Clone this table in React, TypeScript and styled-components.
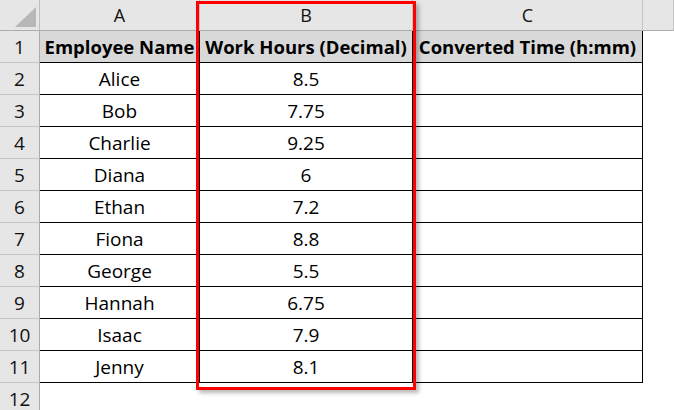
import React from "react";
import styled, { createGlobalStyle } from "styled-components";

const Global = createGlobalStyle`
  html, body { margin: 0; padding: 0; background: #ffffff; }
  body { width: 674px; height: 410px; overflow: hidden; }
`;

const Sheet = styled.div`
  position: relative;
  width: 674px;
  height: 410px;
  overflow: hidden;
  font-family: "Open Sans", "Noto Sans", sans-serif;
  color: #000;
`;

const Grid = styled.div`
  display: grid;
  grid-template-columns: 40px 160px 213px 230px 1fr;
  grid-template-rows: 31px repeat(12, 32px);
`;

const Corner = styled.div`
  position: relative;
  box-sizing: border-box;
  background: #e6e6e6;
  border-right: 1px solid #bfbfbf;
  border-bottom: 1px solid #ababab;
`;

const CornerTriangle = styled.svg`
  position: absolute;
  left: 15px;
  top: 7px;
`;

const ColHead = styled.div`
  box-sizing: border-box;
  background: #e6e6e6;
  border-right: 1px solid #c4c4c4;
  border-bottom: 1px solid #ababab;
  display: flex;
  align-items: center;
  justify-content: center;
  font-size: 18px;
  color: #111;
`;

const RowHead = styled.div`
  box-sizing: border-box;
  background: #e6e6e6;
  border-right: 1px solid #ababab;
  border-bottom: 1px solid #c4c4c4;
  display: flex;
  align-items: center;
  justify-content: center;
  font-size: 19px;
  color: #111;
`;

const Cell = styled.div<{ $head?: boolean; $bordered?: boolean }>`
  box-sizing: border-box;
  background: ${(p) => (p.$head ? "#d9d9d9" : "#ffffff")};
  border-right: 1px solid ${(p) => (p.$bordered ? "#000" : "transparent")};
  border-bottom: 1px solid ${(p) => (p.$bordered ? "#000" : "transparent")};
  display: flex;
  align-items: center;
  justify-content: center;
  font-size: ${(p) => (p.$head ? "18.5px" : "19px")};
  font-weight: ${(p) => (p.$head ? 700 : 400)};
  white-space: nowrap;
`;

const Highlight = styled.div`
  position: absolute;
  left: 196px;
  top: 1px;
  width: 220px;
  height: 389px;
  box-sizing: border-box;
  border: 3px solid #ff0000;
  box-shadow: 3px 3px 4px rgba(0, 0, 0, 0.28);
  pointer-events: none;
`;

const rows: [string, string][] = [
  ["Alice", "8.5"],
  ["Bob", "7.75"],
  ["Charlie", "9.25"],
  ["Diana", "6"],
  ["Ethan", "7.2"],
  ["Fiona", "8.8"],
  ["George", "5.5"],
  ["Hannah", "6.75"],
  ["Isaac", "7.9"],
  ["Jenny", "8.1"],
];

export default function App() {
  return (
    <>
      <Global />
      <Sheet>
        <Grid>
          <Corner>
            <CornerTriangle width="22" height="21" viewBox="0 0 22 21">
              <polygon points="21,0 21,20 0,20" fill="#b7b7b7" />
            </CornerTriangle>
          </Corner>
          <ColHead>A</ColHead>
          <ColHead>B</ColHead>
          <ColHead>C</ColHead>
          <ColHead />

          <RowHead>1</RowHead>
          <Cell $head $bordered>Employee Name</Cell>
          <Cell $head $bordered>Work Hours (Decimal)</Cell>
          <Cell $head $bordered>Converted Time (h:mm)</Cell>
          <Cell />

          {rows.map(([name, hours], i) => (
            <React.Fragment key={name}>
              <RowHead>{i + 2}</RowHead>
              <Cell $bordered>{name}</Cell>
              <Cell $bordered>{hours}</Cell>
              <Cell $bordered />
              <Cell />
            </React.Fragment>
          ))}

          <RowHead>12</RowHead>
          <Cell />
          <Cell />
          <Cell />
          <Cell />
        </Grid>
        <Highlight />
      </Sheet>
    </>
  );
}
